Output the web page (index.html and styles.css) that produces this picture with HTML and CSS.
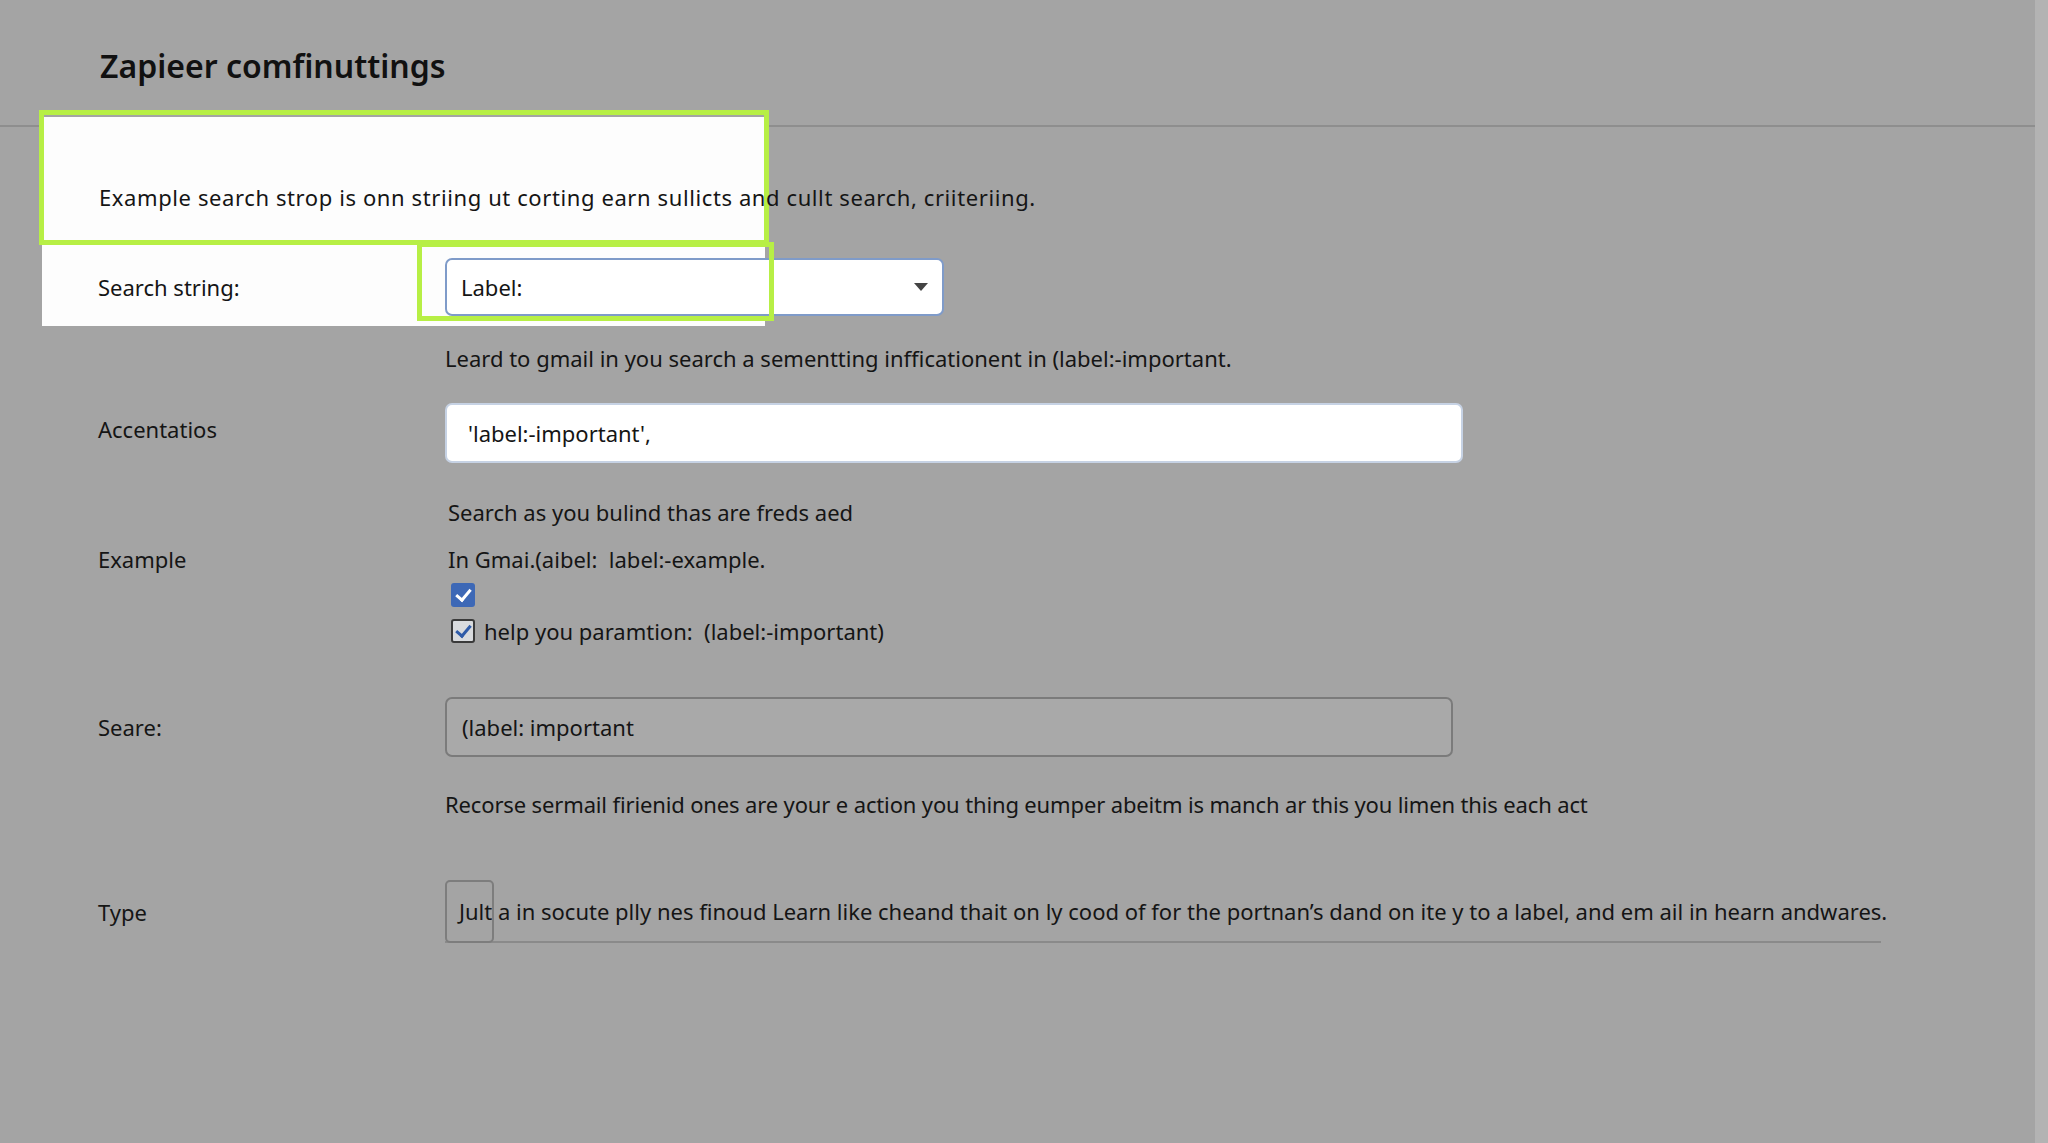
FILE: index.html
```html
<!DOCTYPE html>
<html lang="en">
<head>
    <meta charset="UTF-8">
    <meta name="viewport" content="width=device-width, initial-scale=1.0">
    <title>Zapieer comfinuttings</title>
    <link rel="stylesheet" href="styles.css">
</head>
<body>

    <div class="page">
        <header class="top">
            <h1>Zapieer comfinuttings</h1>
        </header>

        <!-- highlight overlays -->
        <div class="panel"></div>
        <div class="hl hl-desc"></div>
        <div class="hl hl-select"></div>

        <div class="form">
            <p class="desc">Example search strop is onn striing ut corting earn sullicts and cullt search, criiteriing.</p>

            <div class="row row-select">
                <label class="lbl">Search string:</label>
                <div class="select">
                    <span>Label:</span>
                    <span class="caret"></span>
                </div>
            </div>
            <p class="help help-1">Leard to gmail in you search a sementting inffication&#8203;ent in (label:-important.</p>

            <div class="row row-accent">
                <label class="lbl">Accentatios</label>
                <div class="input input-white">'label:-important',</div>
            </div>

            <p class="help help-2">Search as you bulind thas are freds aed</p>

            <div class="row row-example">
                <label class="lbl">Example</label>
                <div class="example">
                    <div class="ex-line">In Gmai.(aibel:&nbsp; label:-example.</div>
                    <div class="check-line"><span class="cb cb-on"></span></div>
                    <div class="check-line"><span class="cb cb-light"></span>help you paramtion:&nbsp; (label:-important)</div>
                </div>
            </div>

            <div class="row row-seare">
                <label class="lbl">Seare:</label>
                <div class="input input-gray">(label: important</div>
            </div>

            <p class="help help-3">Recorse sermail firienid ones are your e action you thing eumper abeitm is manch ar this you limen this each act</p>

            <div class="row row-type">
                <label class="lbl">Type</label>
                <div class="type-field">Jult a in socute plly nes finoud Learn like cheand thait on ly cood of for the portnan’s dand on ite y to a label, and em ail in hearn andwares.</div>
            </div>
        </div>
    </div>

</body>
</html>
```

FILE: styles.css
```css
html, body {
    margin: 0;
    padding: 0;
}
body {
    background: #a4a4a4;
    font-family: "Noto Sans", "Open Sans", sans-serif;
    color: #151515;
    font-size: 22px;
}
.page {
    position: relative;
    height: 1143px;
    overflow: hidden;
    border-right: 13px solid #b3b3b3;
    box-sizing: border-box;
}
.top {
    height: 127px;
    border-bottom: 2px solid #8e8e8e;
    box-sizing: border-box;
    padding: 46px 0 0 100px;
}
.top h1 {
    margin: 0;
    font-size: 32px;
    font-weight: 600;
    line-height: 40px;
    color: #111;
}

/* overlays */
.panel {
    position: absolute;
    left: 42px;
    top: 117px;
    width: 723px;
    height: 209px;
    background: #fdfdfd;
}
.hl {
    position: absolute;
    border: 5px solid #b7ef45;
    box-sizing: border-box;
}
.hl-desc {
    left: 39px;
    top: 110px;
    width: 730px;
    height: 135px;
}
.hl-select {
    left: 417px;
    top: 242px;
    width: 357px;
    height: 79px;
    z-index: 2;
}

.form {
    position: relative;
    z-index: 1;
    padding-left: 98px;
}
.desc {
    margin: 55px 0 0 1px;
    line-height: 30px;
    letter-spacing: 0.6px;
}
.row {
    display: grid;
    grid-template-columns: 347px 1fr;
    align-items: center;
}
.lbl {
    display: block;
}
.row-select {
    margin-top: 46px;
}
.select {
    width: 499px;
    height: 58px;
    box-sizing: border-box;
    border: 2px solid #7f9bc9;
    border-radius: 7px;
    background: #fff;
    display: flex;
    align-items: center;
    justify-content: space-between;
    padding: 0 14px 0 14px;
}
.caret {
    width: 0;
    height: 0;
    border-left: 7px solid transparent;
    border-right: 7px solid transparent;
    border-top: 8px solid #444;
}
.help {
    margin: 0;
    padding-left: 347px;
    line-height: 30px;
}
.help-1 {
    margin-top: 27px;
}
.row-accent {
    margin-top: 30px;
}
.row-accent .lbl {
    margin-top: -8px;
}
.input {
    height: 60px;
    box-sizing: border-box;
    display: flex;
    align-items: center;
    border-radius: 7px;
}
.input-white {
    width: 1018px;
    background: #fff;
    border: 2px solid #c6d2e4;
    padding-left: 21px;
}
.input-gray {
    width: 1008px;
    background: #a9a9a9;
    border: 2px solid #7b7b7b;
    padding-left: 15px;
}
.help-2 {
    margin-top: 34px;
    padding-left: 350px;
}
.row-example {
    margin-top: 17px;
    align-items: start;
}
.example {
    padding-left: 3px;
}
.ex-line {
    line-height: 30px;
}
.check-line {
    display: flex;
    align-items: center;
    height: 30px;
    margin-top: 6px;
}
.cb {
    width: 24px;
    height: 24px;
    box-sizing: border-box;
    border-radius: 3px;
    margin: 0 9px 0 3px;
    position: relative;
}
.cb::after {
    content: "";
    position: absolute;
    left: 8px;
    top: 3px;
    width: 6px;
    height: 12px;
    border-right: 3px solid #fff;
    border-bottom: 3px solid #fff;
    transform: rotate(40deg);
}
.cb-on {
    background: #3d68b6;
}
.cb-light {
    background: #d9dbde;
    border: 2px solid #3a3a3a;
}
.cb-light::after {
    left: 6px;
    top: 1px;
    border-color: #2f5ba8;
}
.row-seare {
    margin-top: 51px;
}
.help-3 {
    margin-top: 32px;
    letter-spacing: -0.14px;
}
.row-type {
    margin-top: 61px;
}
.type-field {
    position: relative;
    width: 1436px;
    height: 63px;
    box-sizing: border-box;
    border-bottom: 2px solid #8a8a8a;
    display: flex;
    align-items: center;
    padding-left: 14px;
    white-space: nowrap;
}
.type-field::before {
    content: "";
    position: absolute;
    left: 0;
    top: 0;
    width: 49px;
    height: 63px;
    box-sizing: border-box;
    border: 2px solid #7d7d7d;
    border-radius: 5px;
}
```
